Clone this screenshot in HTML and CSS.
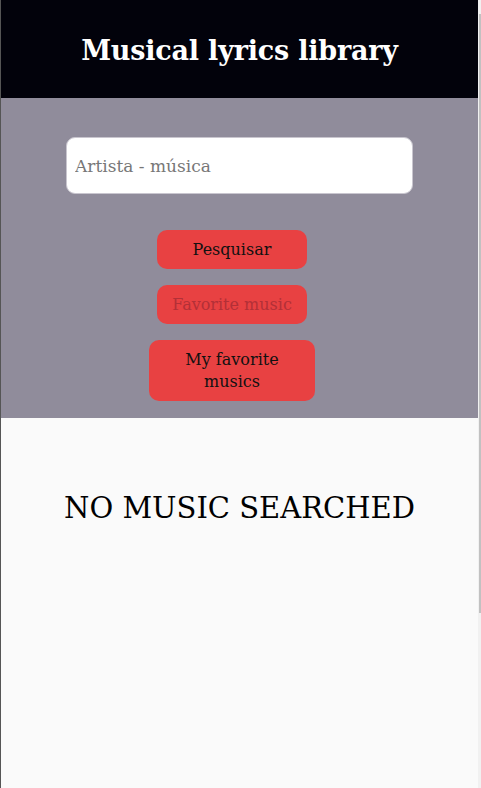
FILE: index.html
```html
<!DOCTYPE html>
<html lang="pt">
<head>
<meta charset="utf-8">
<title>Musical lyrics library</title>
<link rel="stylesheet" href="styles.css">
</head>
<body>
<div class="frame">
  <div class="page">
    <header class="top">
      <h1 class="title">Musical lyrics library</h1>
    </header>
    <section class="search">
      <input class="field" type="text" placeholder="Artista - música">
      <div class="actions">
        <button class="btn">Pesquisar</button>
        <button class="btn btn-off">Favorite music</button>
        <button class="btn btn-wide">My favorite<br>musics</button>
      </div>
    </section>
    <main class="result">
      <p class="empty">NO MUSIC SEARCHED</p>
    </main>
  </div>
  <div class="track"><div class="thumb"></div></div>
</div>
</body>
</html>
```
FILE: styles.css
```css
* { box-sizing: border-box; }
html, body { margin: 0; padding: 0; height: 100%; overflow: hidden; }
body { font-family: "DejaVu Serif", "Liberation Serif", serif; background: #fafafa; }
.frame { display: flex; height: 788px; border-left: 1px solid #555; }
.page { flex: 1; display: flex; flex-direction: column; background: #fafafa; }
.top { height: 98px; background: #02020b; display: flex; align-items: center; justify-content: center; }
.title { margin: 0; color: #fff; font-size: 27px; font-weight: bold; letter-spacing: -0.2px; padding-top: 2px; }
.search { background: #908c9b; display: flex; flex-direction: column; align-items: center; padding: 39px 0 17px; }
.field { width: 347px; height: 57px; border: 1px solid #c9c6cf; border-radius: 9px; background: #fff; font-family: inherit; font-size: 17px; padding: 0 8px; color: #333; outline: none; }
.field::placeholder { color: #777; }
.actions { display: flex; flex-direction: column; align-items: center; gap: 16px; margin-top: 36px; margin-right: 15px; }
.btn { width: 150px; height: 39px; border: none; border-radius: 10px; background: #e84142; color: #111; font-family: inherit; font-size: 16px; line-height: 22px; padding: 0; }
.btn-off { color: #b33037; }
.btn-wide { width: 166px; height: 61px; }
.result { flex: 1; display: flex; justify-content: center; }
.empty { margin: 73px 0 0; font-size: 29px; color: #000; }
.track { width: 3px; background: #f1f1f1; padding-top: 14px; }
.thumb { width: 2px; margin-left: 1px; height: 599px; background: #c1c1c1; }
```
